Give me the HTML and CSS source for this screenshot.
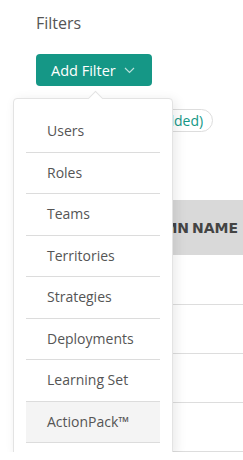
FILE: index.html
```html
<!DOCTYPE html>
<html lang="en">
<head>
  <meta charset="UTF-8">
  <title>Filters</title>
  <link rel="stylesheet" href="styles.css">
</head>
<body>

<div class="page">
  <h3 class="title">Filters</h3>

  <div class="filter-bar">
    <button class="add-btn">Add Filter
      <svg class="chev" width="11" height="7" viewBox="0 0 11 7"><path d="M1 1l4.5 4.5L10 1" fill="none" stroke="currentColor" stroke-width="1.2"/></svg>
    </button>

    <div class="menu">
      <ul>
        <li>Users</li>
        <li>Roles</li>
        <li>Teams</li>
        <li>Territories</li>
        <li>Strategies</li>
        <li>Deployments</li>
        <li>Learning Set</li>
        <li class="active">ActionPack™</li>
      </ul>
    </div>
  </div>

  <div class="chips">
    <span class="chip">Users (0 Added)</span>
  </div>

  <table class="grid">
    <thead>
      <tr><th>COLUMN NAME</th></tr>
    </thead>
    <tbody>
      <tr><td></td></tr>
      <tr><td></td></tr>
      <tr><td></td></tr>
      <tr><td></td></tr>
    </tbody>
  </table>
</div>

</body>
</html>
```

FILE: styles.css
```css
* {
  box-sizing: border-box;
}
body {
  margin: 0;
  font-family: "Open Sans", Arial, sans-serif;
  background: #fff;
  color: #555;
  overflow: hidden;
}
.page {
  padding: 12px 0 0 36px;
}
.title {
  margin: 0;
  font-size: 16px;
  font-weight: 400;
  color: #555;
  line-height: 22px;
}
.filter-bar {
  position: relative;
  margin-top: 20px;
}
.add-btn {
  display: flex;
  align-items: center;
  gap: 8px;
  width: 116px;
  height: 32px;
  padding: 0 0 0 15px;
  border: none;
  border-radius: 4px;
  background: #159786;
  color: #fff;
  font-family: inherit;
  font-size: 14.5px;
  font-weight: 500;
}
.chev {
  color: rgba(255, 255, 255, 0.7);
  margin-top: 1px;
}
.menu {
  position: absolute;
  left: -23px;
  top: 44px;
  width: 160px;
  height: 358px;
  padding: 12px 12px 0;
  background: #fff;
  border: 1px solid #e3e3e3;
  border-radius: 4px;
  box-shadow: 3px 2px 12px rgba(0, 0, 0, 0.09);
  z-index: 2;
}
.menu::before {
  content: "";
  position: absolute;
  left: 76px;
  top: -6px;
  width: 10px;
  height: 10px;
  background: #fff;
  border-left: 1px solid #e3e3e3;
  border-top: 1px solid #e3e3e3;
  transform: rotate(45deg);
}
.menu ul {
  list-style: none;
  margin: 0;
  padding: 0;
}
.menu li {
  height: 41.5px;
  line-height: 40.5px;
  padding-left: 21px;
  border-bottom: 1px solid #dcdcdc;
  font-size: 14px;
  color: #555;
}
.menu li.active {
  background: #f4f4f4;
}
.chips {
  margin-top: 23px;
  height: 24px;
}
.chip {
  display: inline-block;
  height: 23px;
  line-height: 21px;
  padding: 0 9px 0 12px;
  margin-left: 51px;
  border: 1px solid #ddd;
  border-radius: 12px;
  color: #159786;
  font-size: 14px;
}
.grid {
  margin-top: 67px;
  width: 100%;
  border-collapse: collapse;
  border-left: 1px solid #ddd;
}
.grid th {
  height: 55px;
  padding: 0 5px 0 0;
  background: #d9d9d9;
  text-align: right;
  font-family: "DejaVu Sans", sans-serif;
  font-size: 14px;
  font-weight: 700;
  word-spacing: -2px;
  color: #444;
  white-space: nowrap;
}
.grid td {
  height: 49px;
  border-bottom: 1px solid #ddd;
}
```
